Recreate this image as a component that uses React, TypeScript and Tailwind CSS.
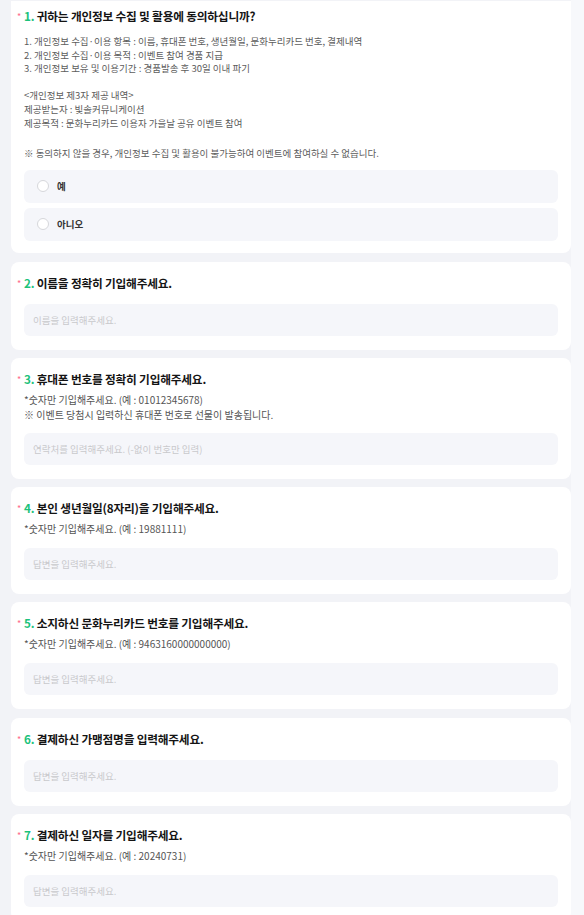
import React from "react";

const Title = ({ n, text }: { n: number; text: string }) => (
  <div className="relative text-[11.7px] leading-[18px] font-bold text-[#141414] tracking-[-0.2px]">
    <span className="absolute left-[-7px] top-[6px] text-[9px] leading-[8px] font-normal text-[#ff6b8a]">*</span>
    <span className="text-[#1cc27b]">{n}.</span> {text}
  </div>
);

const Hint = ({ lines }: { lines: string[] }) => (
  <div className="mt-[4px] text-[10px] leading-[15px] text-[#555]">
    {lines.map((l, i) => (
      <div key={i}>{l}</div>
    ))}
  </div>
);

const Field = ({ ph, mt }: { ph: string; mt: string }) => (
  <input
    readOnly
    placeholder={ph}
    className={`${mt} block w-full h-[32px] rounded-[6px] bg-[#f5f6fa] px-[9px] text-[9.5px] outline-none placeholder:text-[#c9c9cc]`}
  />
);

const Card = ({ children, first }: { children: React.ReactNode; first?: boolean }) => (
  <div
    className={
      first
        ? "bg-white rounded-b-[8px] px-[13px] pt-[6px] pb-[12px]"
        : "bg-white rounded-[8px] px-[13px] pt-[12px] pb-[14px]"
    }
  >
    {children}
  </div>
);

export default function App() {
  return (
    <div className="flex min-h-[915px] font-['Noto_Sans_CJK_KR',sans-serif]">
      <div className="w-[571px] bg-[#f2f3f7] pl-[11px] pt-[1px] flex flex-col gap-[8px] pb-[20px]">
        <div className="mb-[1px]">
          <Card first>
            <Title n={1} text="귀하는 개인정보 수집 및 활용에 동의하십니까?" />
            <div className="mt-[10px] text-[9.5px] leading-[13.6px] text-[#5c5c5c]">
              <div>1. 개인정보 수집·이용 항목 : 이름, 휴대폰 번호, 생년월일, 문화누리카드 번호, 결제내역</div>
              <div>2. 개인정보 수집·이용 목적 : 이벤트 참여 경품 지급</div>
              <div>3. 개인정보 보유 및 이용기간 : 경품발송 후 30일 이내 파기</div>
              <div className="h-[13.6px]" />
              <div>&lt;개인정보 제3자 제공 내역&gt;</div>
              <div>제공받는자 : 빛솔커뮤니케이션</div>
              <div>제공목적 : 문화누리카드 이용자 가을날 공유 이벤트 참여</div>
              <div className="mt-[17px]">※ 동의하지 않을 경우, 개인정보 수집 및 활용이 불가능하여 이벤트에 참여하실 수 없습니다.</div>
            </div>
            <div className="mt-[9px] flex flex-col gap-[5px]">
              {["예", "아니오"].map((o) => (
                <div key={o} className="h-[33px] rounded-[6px] bg-[#f5f6fa] flex items-center pl-[13px] gap-[8px]">
                  <span className="w-[12px] h-[12px] rounded-full border border-[#d6d7db] bg-white" />
                  <span className="text-[9.5px] font-bold text-[#333]">{o}</span>
                </div>
              ))}
            </div>
          </Card>
        </div>

        <Card>
          <Title n={2} text="이름을 정확히 기입해주세요." />
          <Field ph="이름을 입력해주세요." mt="mt-[12px]" />
        </Card>

        <Card>
          <Title n={3} text="휴대폰 번호를 정확히 기입해주세요." />
          <Hint lines={["*숫자만 기입해주세요. (예 : 01012345678)", "※ 이벤트 당첨시 입력하신 휴대폰 번호로 선물이 발송됩니다."]} />
          <Field ph="연락처를 입력해주세요. (-없이 번호만 입력)" mt="mt-[11px]" />
        </Card>

        <Card>
          <Title n={4} text="본인 생년월일(8자리)을 기입해주세요." />
          <Hint lines={["*숫자만 기입해주세요. (예 : 19881111)"]} />
          <Field ph="답변을 입력해주세요." mt="mt-[12px]" />
        </Card>

        <Card>
          <Title n={5} text="소지하신 문화누리카드 번호를 기입해주세요." />
          <Hint lines={["*숫자만 기입해주세요. (예 : 9463160000000000)"]} />
          <Field ph="답변을 입력해주세요." mt="mt-[12px]" />
        </Card>

        <div className="mt-[1px]">
          <Card>
            <Title n={6} text="결제하신 가맹점명을 입력해주세요." />
            <Field ph="답변을 입력해주세요." mt="mt-[12px]" />
          </Card>
        </div>

        <Card>
          <Title n={7} text="결제하신 일자를 기입해주세요." />
          <Hint lines={["*숫자만 기입해주세요. (예 : 20240731)"]} />
          <Field ph="답변을 입력해주세요." mt="mt-[12px]" />
        </Card>
      </div>
      <div className="flex-1 bg-[#f7f8fb]" />
    </div>
  );
}
